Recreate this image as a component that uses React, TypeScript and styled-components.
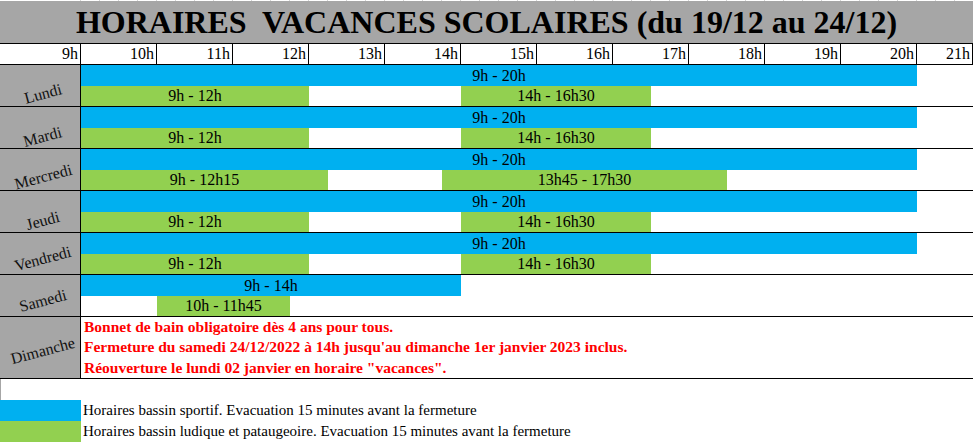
import React from "react";
import styled, { createGlobalStyle } from "styled-components";

const GlobalStyle = createGlobalStyle`
  *, *::before, *::after { box-sizing: border-box; }
  html, body { margin: 0; padding: 0; background: #fff; }
  body { font-family: "Liberation Serif", "Times New Roman", serif; color: #000; }
`;

const BLUE = "#00b0f0";
const GREEN = "#92d050";
const GRAY = "#a6a6a6";

const Page = styled.div`
  width: 973px;
  height: 442px;
  overflow: hidden;
  display: flex;
  flex-direction: column;
  background: #fff;
`;

const GridStrip = styled.div`
  height: 1px;
  flex: 0 0 1px;
  background-color: #fff;
  background-image: repeating-linear-gradient(90deg, #d4d4d4 0 1px, #fff 1px 19px);
  background-position: 80px 0;
  background-size: 893px 1px;
  background-repeat: no-repeat;
`;

const TitleBar = styled.div`
  flex: 0 0 43px;
  background: ${GRAY};
  border-bottom: 1px solid #000;
  display: flex;
  align-items: center;
  justify-content: center;
  padding-top: 1px;
  font-weight: bold;
  font-size: 32px;
  white-space: pre;
`;

const HeaderRow = styled.div`
  flex: 0 0 21px;
  display: flex;
  border-bottom: 1px solid #000;
  overflow: hidden;
`;

const HeaderCell = styled.div<{ $w?: number }>`
  flex: ${(p) => (p.$w ? `0 0 ${p.$w}px` : "1 1 0")};
  border-right: 1px solid #000;
  text-align: right;
  padding-right: 2px;
  font-size: 16px;
  line-height: 20px;
  white-space: nowrap;
`;

const DayRow = styled.div<{ $h: number }>`
  flex: 0 0 ${(p) => p.$h}px;
  display: flex;
  border-bottom: 1px solid #000;
`;

const DayLabel = styled.div`
  flex: 0 0 81px;
  background: ${GRAY};
  border-right: 1px solid #000;
  display: flex;
  align-items: center;
  justify-content: center;
`;

const DayName = styled.span<{ $dy: number }>`
  display: inline-block;
  font-size: 16px;
  color: #111;
  transform: translate(3px, ${(p) => p.$dy}px) rotate(-15deg);
`;

const Tracks = styled.div`
  flex: 1;
  min-width: 0;
  display: flex;
  flex-direction: column;
  overflow: hidden;
`;

const Track = styled.div<{ $h: number }>`
  flex: 0 0 ${(p) => p.$h}px;
  display: grid;
  grid-template-columns: repeat(48, 19px);
`;

const Bar = styled.div<{ $from: number; $to: number; $kind: "blue" | "green" }>`
  grid-column: ${(p) => p.$from} / ${(p) => p.$to};
  background: ${(p) => (p.$kind === "blue" ? BLUE : GREEN)};
  display: flex;
  align-items: center;
  justify-content: center;
  font-size: 16px;
  white-space: nowrap;
`;

const Notes = styled.div`
  flex: 1;
  display: flex;
  flex-direction: column;
  padding-left: 3px;
`;

const Note = styled.div`
  flex: 1;
  display: flex;
  align-items: center;
  color: #ff0000;
  font-weight: bold;
  font-size: 15.5px;
  white-space: nowrap;
`;

const BlankRow = styled.div`
  flex: 0 0 21px;
  border-left: 1px solid ${GRAY};
`;

const LegendRow = styled.div`
  flex: 0 0 21px;
  display: flex;
  align-items: stretch;
`;

const Swatch = styled.div<{ $kind: "blue" | "green" }>`
  flex: 0 0 81px;
  background: ${(p) => (p.$kind === "blue" ? BLUE : GREEN)};
`;

const LegendText = styled.div`
  display: flex;
  align-items: center;
  padding-left: 2px;
  font-size: 15px;
  white-space: nowrap;
`;

type Slot = { from: string; to: string; label: string };
type Day = { name: string; dy: number; blue: Slot[]; green: Slot[] };

const toCol = (t: string) => {
  const [h, m] = t.split("h");
  const hours = parseInt(h, 10) + (m ? parseInt(m, 10) / 60 : 0);
  return Math.round((hours - 9) * 4) + 1;
};

const days: Day[] = [
  { name: "Lundi", dy: 8, blue: [{ from: "9h", to: "20h", label: "9h - 20h" }], green: [{ from: "9h", to: "12h", label: "9h - 12h" }, { from: "14h", to: "16h30", label: "14h - 16h30" }] },
  { name: "Mardi", dy: 9, blue: [{ from: "9h", to: "20h", label: "9h - 20h" }], green: [{ from: "9h", to: "12h", label: "9h - 12h" }, { from: "14h", to: "16h30", label: "14h - 16h30" }] },
  { name: "Mercredi", dy: 7, blue: [{ from: "9h", to: "20h", label: "9h - 20h" }], green: [{ from: "9h", to: "12h15", label: "9h - 12h15" }, { from: "13h45", to: "17h30", label: "13h45 - 17h30" }] },
  { name: "Jeudi", dy: 9, blue: [{ from: "9h", to: "20h", label: "9h - 20h" }], green: [{ from: "9h", to: "12h", label: "9h - 12h" }, { from: "14h", to: "16h30", label: "14h - 16h30" }] },
  { name: "Vendredi", dy: 5, blue: [{ from: "9h", to: "20h", label: "9h - 20h" }], green: [{ from: "9h", to: "12h", label: "9h - 12h" }, { from: "14h", to: "16h30", label: "14h - 16h30" }] },
  { name: "Samedi", dy: 5, blue: [{ from: "9h", to: "14h", label: "9h - 14h" }], green: [{ from: "10h", to: "11h45", label: "10h - 11h45" }] },
];

const hours = ["10h", "11h", "12h", "13h", "14h", "15h", "16h", "17h", "18h", "19h", "20h"];

const renderTrack = (slots: Slot[], kind: "blue" | "green", h: number) => (
  <Track $h={h}>
    {slots.map((s) => (
      <Bar key={s.label} $kind={kind} $from={toCol(s.from)} $to={toCol(s.to)}>
        {s.label}
      </Bar>
    ))}
  </Track>
);

export default function App() {
  return (
    <Page>
      <GlobalStyle />
      <GridStrip />
      <TitleBar>{"HORAIRES  VACANCES SCOLAIRES (du 19/12 au 24/12)"}</TitleBar>
      <HeaderRow>
        <HeaderCell $w={81}>9h</HeaderCell>
        {hours.map((h) => (
          <HeaderCell key={h} $w={76}>
            {h}
          </HeaderCell>
        ))}
        <HeaderCell>21h</HeaderCell>
      </HeaderRow>
      {days.map((d) => (
        <DayRow key={d.name} $h={42}>
          <DayLabel>
            <DayName $dy={d.dy}>{d.name}</DayName>
          </DayLabel>
          <Tracks>
            {renderTrack(d.blue, "blue", 21)}
            {renderTrack(d.green, "green", 20)}
          </Tracks>
        </DayRow>
      ))}
      <DayRow $h={62}>
        <DayLabel>
          <DayName $dy={3}>Dimanche</DayName>
        </DayLabel>
        <Notes>
          <Note>Bonnet de bain obligatoire dès 4 ans pour tous.</Note>
          <Note>Fermeture du samedi 24/12/2022 à 14h jusqu'au dimanche 1er janvier 2023 inclus.</Note>
          <Note>Réouverture le lundi 02 janvier en horaire "vacances".</Note>
        </Notes>
      </DayRow>
      <BlankRow />
      <LegendRow>
        <Swatch $kind="blue" />
        <LegendText>Horaires bassin sportif. Evacuation 15 minutes avant la fermeture</LegendText>
      </LegendRow>
      <LegendRow>
        <Swatch $kind="green" />
        <LegendText>Horaires bassin ludique et pataugeoire. Evacuation 15 minutes avant la fermeture</LegendText>
      </LegendRow>
    </Page>
  );
}
